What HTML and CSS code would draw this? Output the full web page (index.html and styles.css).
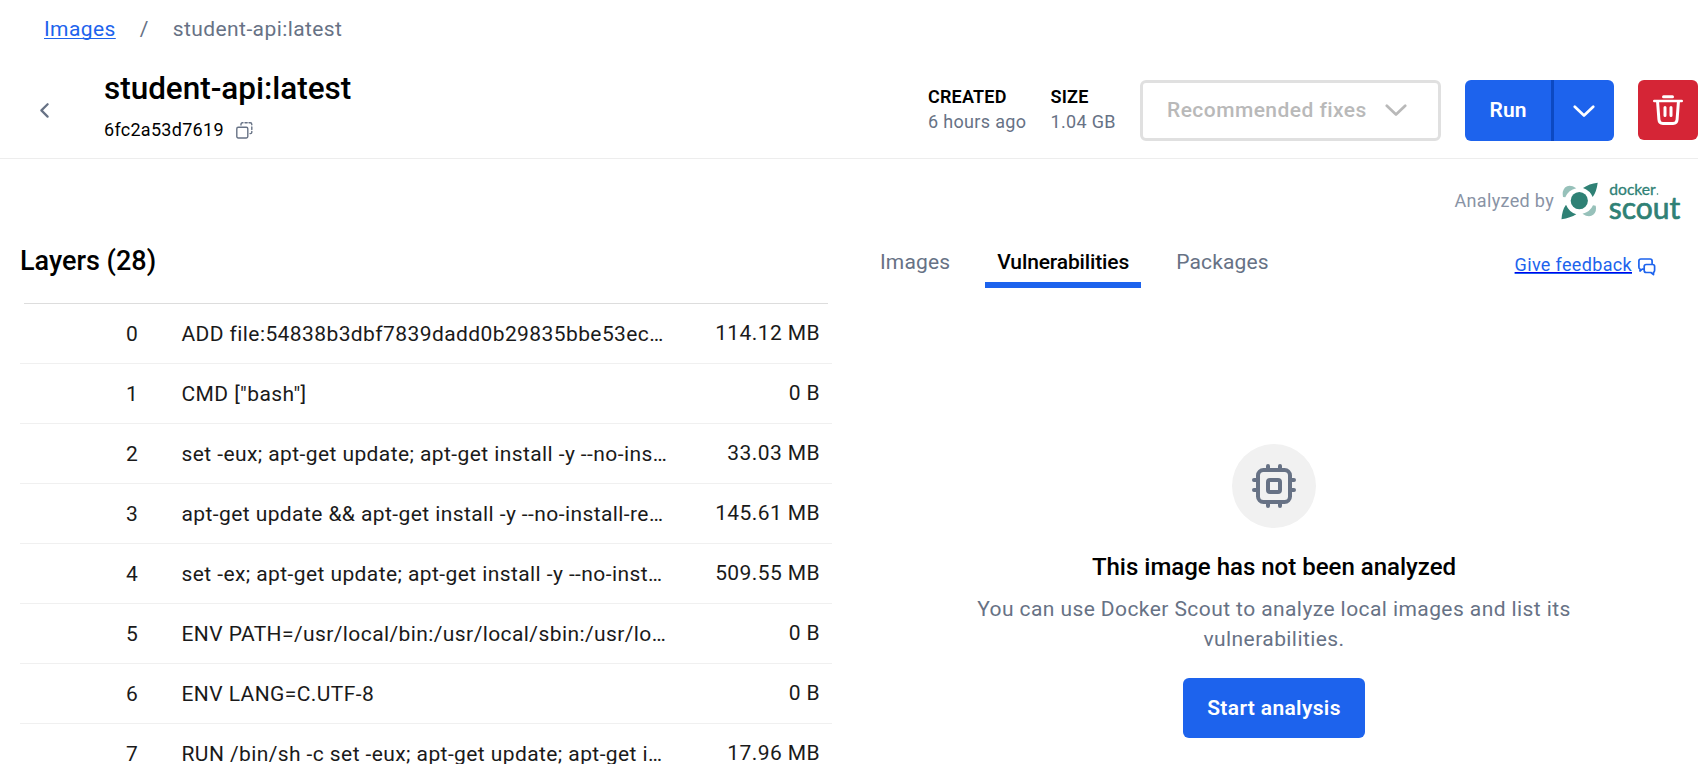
FILE: index.html
```html
<!DOCTYPE html>
<html lang="en">
<head>
<meta charset="utf-8">
<title>student-api:latest</title>
<link rel="stylesheet" href="styles.css">
</head>
<body>
<nav class="breadcrumb"><a class="link" href="#">Images</a><span class="sep">/</span><span>student-api:latest</span></nav>
<header class="header">
  <svg class="back" viewBox="0 0 9 15"><path d="M7.6 1.2 1.4 7.4l6.200 6.200"/></svg>
  <div class="title-block">
    <h1 class="title">student-api:latest</h1>
    <div class="hash"><span>6fc2a53d7619</span>
      <svg class="copy" viewBox="0 0 17 17"><rect x=".8" y="5.3" width="11" height="10.7" rx="1.4"/><path d="M5 3V2.200Q5 .8 6.400.8H7M9 .8h2.200M13 .8h1.200q1.600 0 1.600 1.600v.4M15.800 5v2.400M15.800 9.400v.8q0 1.400-1.400 1.400H14"/></svg>
    </div>
  </div>
  <dl class="meta created"><dt>CREATED</dt><dd>6 hours ago</dd></dl>
  <dl class="meta size"><dt>SIZE</dt><dd>1.04 GB</dd></dl>
  <button class="fixes"><span class="fixes-label">Recommended fixes</span><svg class="chev" viewBox="0 0 22 13"><path d="M1.800 1.800 11 10.600l9.200-8.800"/></svg></button>
  <div class="run-group"><button class="run">Run</button><button class="run-more"><svg class="chev" viewBox="0 0 22 13"><path d="M1.800 1.800 11 10.600l9.200-8.800"/></svg></button></div>
  <button class="delete"><svg class="trash" viewBox="0 0 30 30"><path d="M10.500 1.800h9" stroke-width="3"/><path d="M1.300 6h27.400" stroke-width="2.600"/><path d="M4.600 7l1.300 17.500q.3 4 4 4h10.200q3.700 0 4-4L25.400 7" stroke-width="3"/><path d="M12 12.500v8M18 12.500v8" stroke-width="3"/></svg></button>
</header>
<main class="main">
  <section class="layers">
    <h2 class="layers-title">Layers (28)</h2>
    <ol class="list">
      <li class="row"><span class="num">0</span><span class="cmd">ADD file:54838b3dbf7839dadd0b29835bbe53ec…</span><span class="sz">114.12 MB</span></li>
      <li class="row"><span class="num">1</span><span class="cmd">CMD ["bash"]</span><span class="sz">0 B</span></li>
      <li class="row"><span class="num">2</span><span class="cmd">set -eux; apt-get update; apt-get install -y --no-ins…</span><span class="sz">33.03 MB</span></li>
      <li class="row"><span class="num">3</span><span class="cmd">apt-get update &amp;&amp; apt-get install -y --no-install-re…</span><span class="sz">145.61 MB</span></li>
      <li class="row"><span class="num">4</span><span class="cmd">set -ex; apt-get update; apt-get install -y --no-inst…</span><span class="sz">509.55 MB</span></li>
      <li class="row"><span class="num">5</span><span class="cmd">ENV PATH=/usr/local/bin:/usr/local/sbin:/usr/lo…</span><span class="sz">0 B</span></li>
      <li class="row"><span class="num">6</span><span class="cmd">ENV LANG=C.UTF-8</span><span class="sz">0 B</span></li>
      <li class="row"><span class="num">7</span><span class="cmd">RUN /bin/sh -c set -eux; apt-get update; apt-get i…</span><span class="sz">17.96 MB</span></li>
    </ol>
  </section>
  <section class="details">
    <div class="analyzed"><span>Analyzed by</span>
      <svg class="scout" viewBox="0 0 120 38">
        <g fill="#2f8175"><circle cx="18.300" cy="17.700" r="8.600"/><path d="M36.700-.3Q35.500 9 31.700 14 29 7.500 22 5 28 .8 36.700-.3zM.5 36.300Q1 27 5 21.700 8 29 15.300 31.300 9.500 35 .5 36.300z"/></g>
        <path d="M4.300 14.200 2 14Q.8 8 4 4.500 8.500.8 15.300 5.300 7.500 7 4.300 14.200zM32 22.200 34.700 22.700Q36 28 32.500 31.500 28 35.500 21.500 30.700 29 29 32 22.200z" fill="#97c1ba"/>
        <text class="word small" x="48.300" y="11.700" textLength="46.500" lengthAdjust="spacingAndGlyphs">docker</text><circle cx="96.500" cy="11" r=".8" fill="#2f8175"/><text class="word big" x="47.700" y="35.500" textLength="71.500" lengthAdjust="spacingAndGlyphs">scout</text></svg>
    </div>
    <div class="tabs">
      <span class="tab">Images</span><span class="tab active">Vulnerabilities</span><span class="tab">Packages</span>
      <a class="feedback" href="#"><span class="link">Give feedback</span><svg class="chat" viewBox="0 0 18 18"><path d="M5.500 11.200H4.200L2 13V11Q.9 10.500.9 9.200V3Q.9 1 2.900 1h9.200q2 0 2 2v2.500"/><path d="M8.200 6.500h6.400q2 0 2 2v3.800q0 1.700-1.100 2v2.300l-2.600-2.100H8.200q-2 0-2-2v-4q0-2 2-2z"/></svg></a>
    </div>
    <div class="empty">
      <div class="badge"><svg class="chip" viewBox="0 0 44 44"><rect x="6" y="6" width="32" height="32" rx="5.500"/><rect x="16" y="16" width="12" height="12" rx="2"/><path d="M16 5V2M28 5V2M16 42v-3M28 42v-3M5 16H2M5 26H2M42 16h-3M42 26h-3"/></svg></div>
      <h3 class="empty-title">This image has not been analyzed</h3>
      <p class="empty-text">You can use Docker Scout to analyze local images and list its<br>vulnerabilities.</p>
      <button class="start">Start analysis</button>
    </div>
  </section>
</main>
</body>
</html>
```
FILE: styles.css
```css
* { box-sizing: border-box; }
body { margin: 0; width: 1698px; height: 764px; overflow: hidden; background: #fff; color: #000; font: 21px/30px Roboto, sans-serif; }
h1, h2, h3, p, dl, dd, ol { margin: 0; padding: 0; font-weight: 500; }
button { border: 0; padding: 0; font: inherit; color: #fff; background: #1d63ed; }
svg { fill: none; flex: none; stroke-linecap: round; stroke-linejoin: round; }
.link { color: #1d63ed; text-decoration: underline; text-underline-offset: 2px; text-decoration-thickness: 1px; text-decoration-skip-ink: none; }
.breadcrumb { display: flex; height: 58px; padding: 14px 0 0 44px; color: #677285; letter-spacing: .41px; }
.sep { width: 57px; text-align: center; }
.header { display: flex; height: 101px; border-bottom: 1px solid #ededed; }
.back { width: 9px; height: 15px; margin: 44.5px 55.5px 0 39.5px; stroke: #677285; stroke-width: 2.2; }
.title-block { width: 824px; padding-top: 11px; }
.title { font-size: 31.5px; line-height: 40px; letter-spacing: -.03px; }
.hash { display: flex; align-items: center; gap: 12.5px; height: 41px; font-size: 18px; letter-spacing: .29px; }
.copy { width: 17px; height: 17px; margin-top: 2px; stroke: #677285; stroke-width: 1.4; }
.meta { padding-top: 26px; font-size: 18px; line-height: 25px; letter-spacing: .33px; }
.meta dd { color: #677285; font-weight: 400; }
.meta dt { font-weight: 600; line-height: 25px; letter-spacing: .2px; }
.created { width: 122.5px; }
.size { width: 89.5px; }
.fixes { display: flex; align-items: center; width: 301px; height: 61px; margin: 22px 24px 0 0; padding-left: 24px; border: 3px solid #e0e0e0; border-radius: 6px; background: #fff; color: #b9b9b9; font-weight: 500; letter-spacing: .45px; gap: 18px; }
.fixes-label { padding-bottom: 2px; }
.chev { width: 22px; height: 13px; stroke: currentColor; stroke-width: 2.7; }
.run-group { display: flex; width: 149px; height: 61px; margin: 22px 24px 0 0; border-radius: 6px; overflow: hidden; }
.run { width: 86px; padding-bottom: 2px; font-weight: 600; }
.run-more { width: 63px; border-left: 3px solid #0c49c2; }
.delete { display: flex; align-items: center; justify-content: center; width: 60px; height: 60px; margin-top: 22px; border-radius: 6px; background: #d52536; }
.trash { width: 30px; height: 30px; stroke: #fff; }
.main { display: flex; height: 605px; }
.layers { width: 812px; margin-left: 20px; }
.layers-title { height: 144px; padding-top: 82px; font-size: 27px; line-height: 40px; }
.list { list-style: none; color: #1a1a1a; letter-spacing: .41px; }
.list::before { content: ""; display: block; height: 1px; margin: 0 4px; background: #ddd; }
.row { display: flex; height: 60px; padding-top: 15px; border-bottom: 1px solid #f0f0f0; font-weight: 400; }
.num { width: 161.5px; padding-left: 106px; }
.cmd { width: 500px; white-space: nowrap; }
.sz { flex: 1; margin-top: -1px; padding-right: 12px; text-align: right; }
.details { width: 830px; margin-left: 36px; }
.analyzed { display: flex; align-items: center; justify-content: flex-end; height: 84px; font-size: 18px; letter-spacing: .33px; color: #8993a5; }
.scout { width: 120px; height: 38px; margin: 1px 17px 0 7px; overflow: visible; }
.word { fill: #2f8175; stroke: #2f8175; font-family: Lato, sans-serif; font-weight: 400; letter-spacing: 0; }
.small { font-size: 15px; stroke-width: .3; }
.big { font-size: 31px; stroke-width: .7; }
.tabs { display: flex; height: 45px; }
.tab { padding: 4px 12px 0; margin-right: 23px; border-bottom: 6px solid transparent; color: #677285; letter-spacing: .15px; }
.active { border-color: #1d63ed; color: #000; font-weight: 500; letter-spacing: -.13px; }
.feedback { display: flex; margin-left: auto; padding-right: 42px; padding-top: 7px; font-size: 18px; letter-spacing: .34px; gap: 6px; }
.chat { width: 18px; height: 18px; margin-top: 8px; stroke: #1d63ed; stroke-width: 1.7; }
.empty { display: flex; flex-direction: column; align-items: center; width: 812px; padding-top: 156px; text-align: center; }
.badge { display: flex; align-items: center; justify-content: center; width: 84px; height: 84px; border-radius: 50%; background: #f1f1f1; }
.chip { width: 44px; height: 44px; stroke: #677285; stroke-width: 4; }
.empty-title { margin-top: 21px; font-size: 24px; line-height: 36px; }
.empty-text { margin-top: 9px; color: #677285; font-weight: 400; letter-spacing: .42px; }
.start { width: 182px; height: 60px; margin-top: 24px; border-radius: 6px; font-weight: 600; letter-spacing: .35px; }
```
